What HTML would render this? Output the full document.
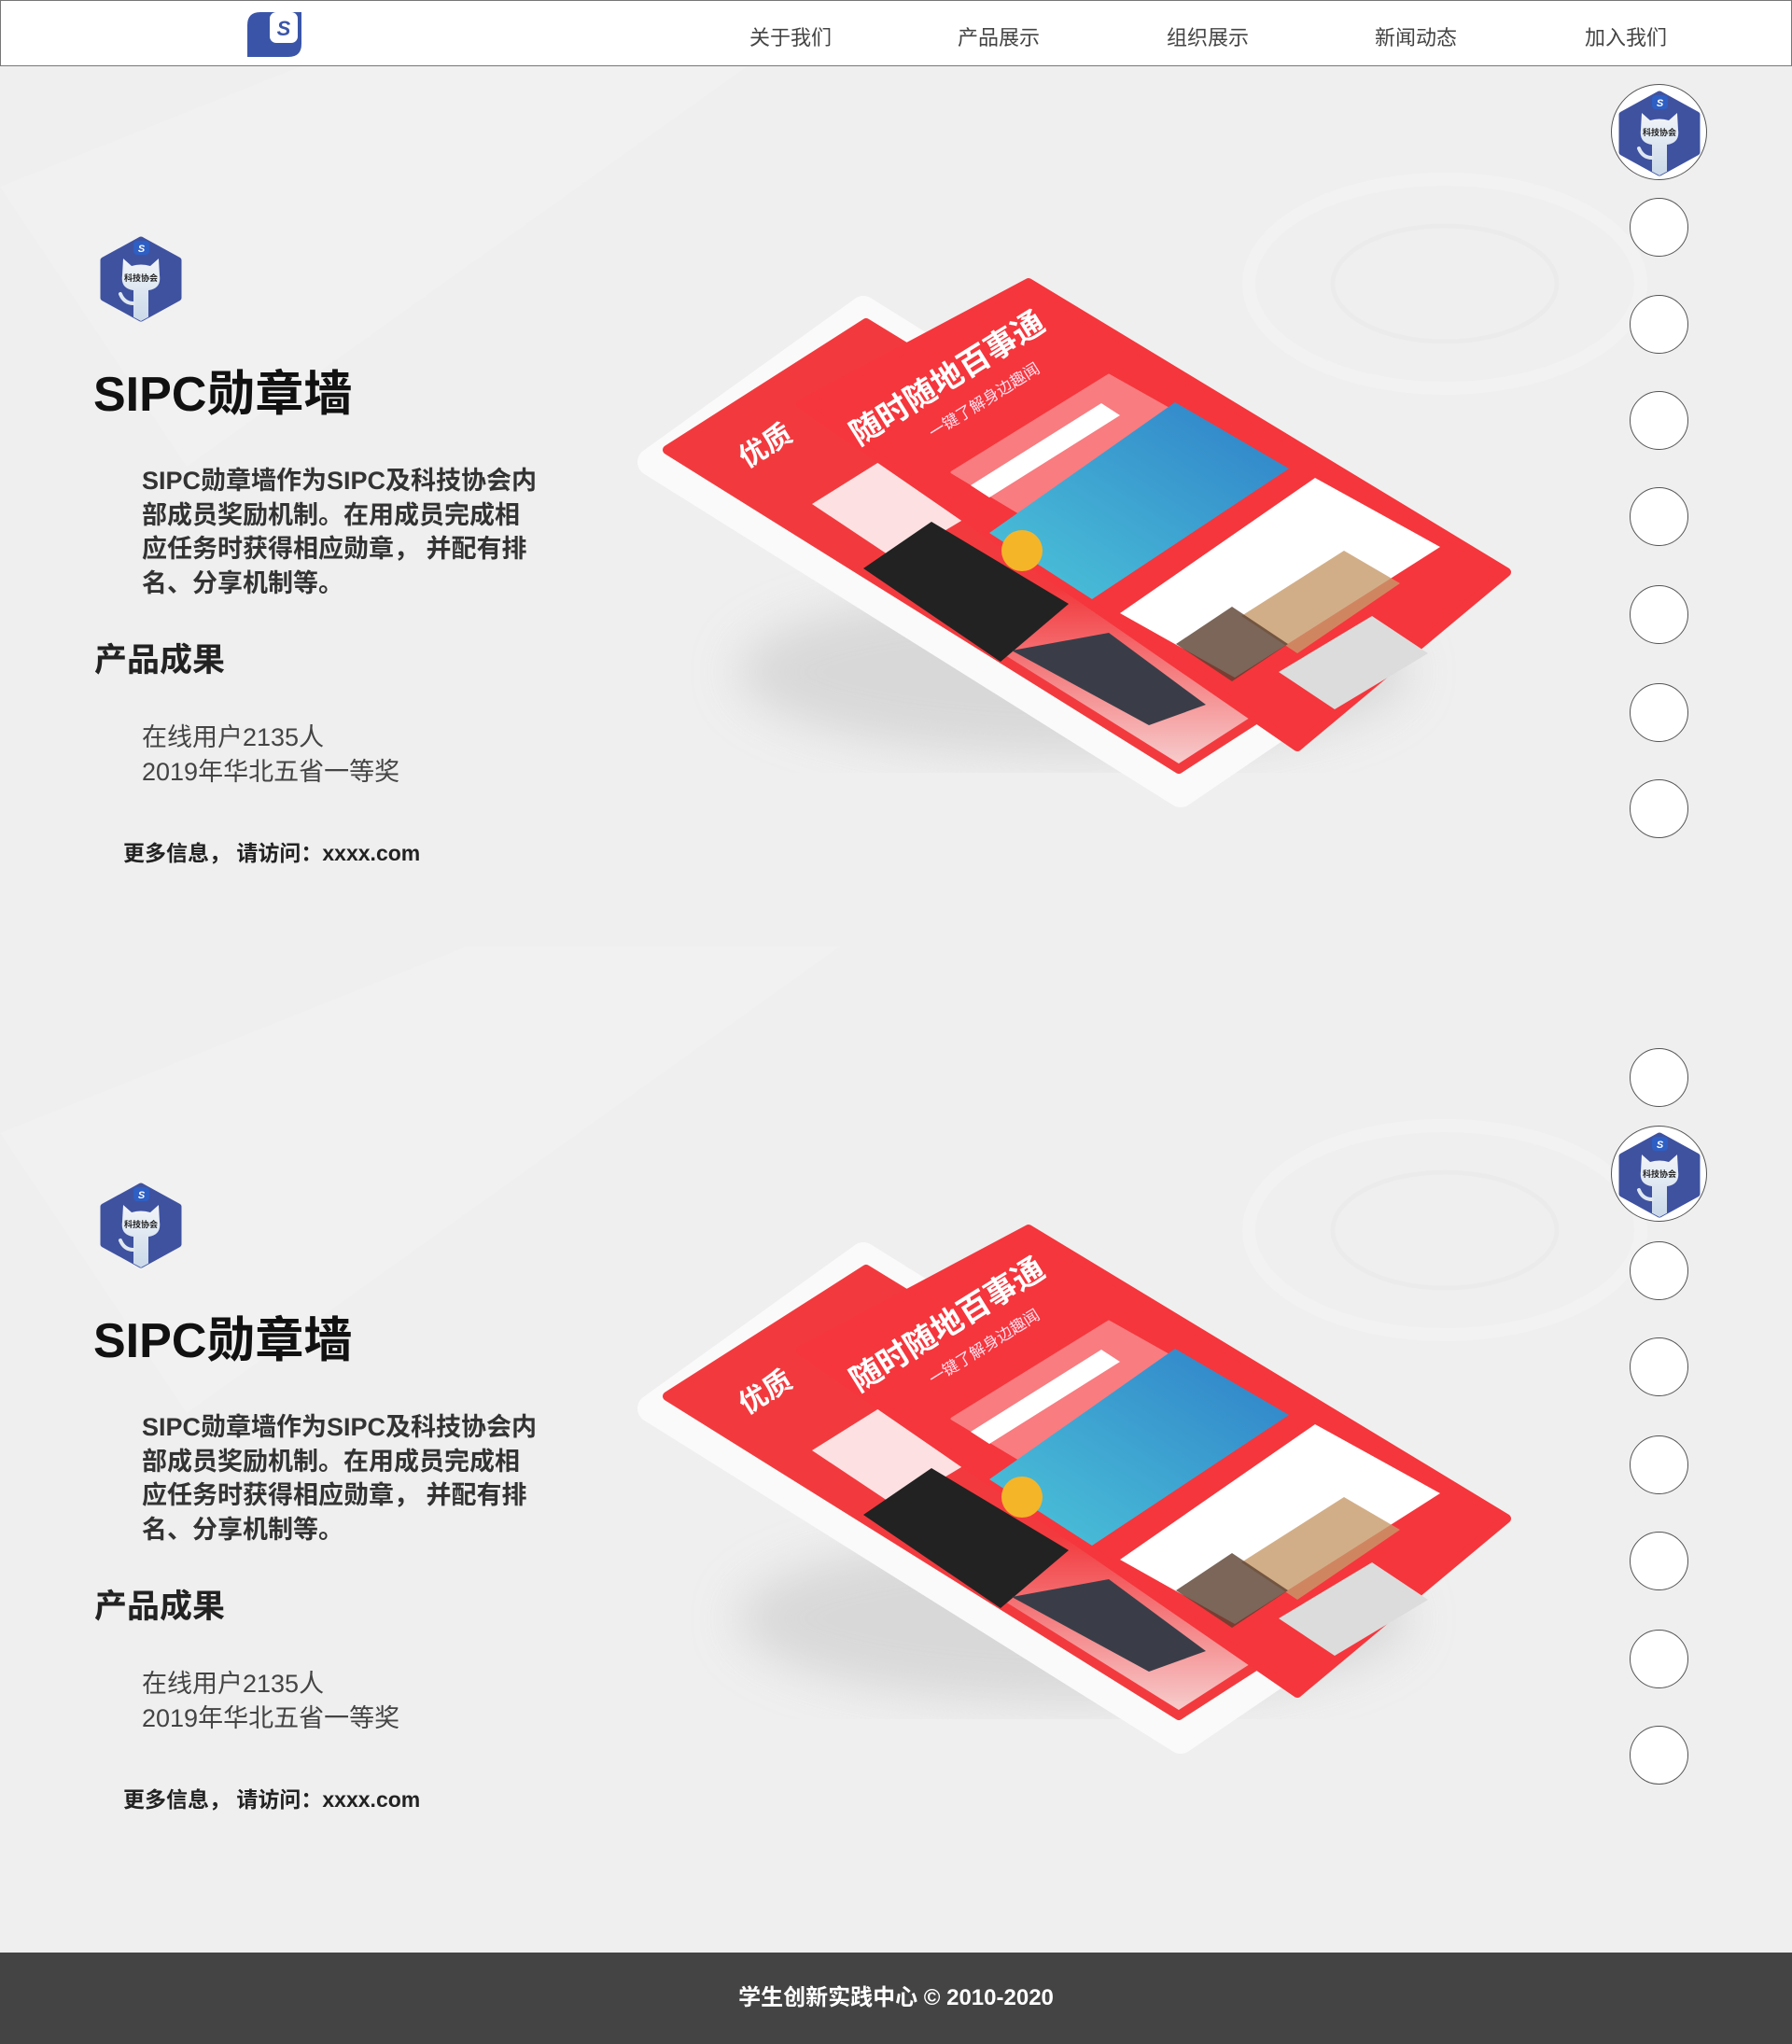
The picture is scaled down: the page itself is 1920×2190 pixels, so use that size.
<!DOCTYPE html>
<html><head><meta charset="utf-8">
<style>
*{margin:0;padding:0;box-sizing:border-box}
html,body{width:1920px;height:2190px;overflow:hidden;background:#efefef;font-family:"Liberation Sans","Noto Sans CJK SC",sans-serif}
.abs{position:absolute}
nav{position:absolute;left:0;top:0;width:1920px;height:71px;background:#fff;border:1px solid #777}
.nv{position:absolute;top:22px;font-size:22px;color:#444;transform:translateX(-50%);white-space:nowrap}
.title{position:absolute;left:100px;font-size:52px;font-weight:bold;color:#111;line-height:1;white-space:nowrap}
.para{position:absolute;left:152px;font-size:27px;font-weight:bold;color:#333;line-height:36.5px;white-space:nowrap}
.h2{position:absolute;left:101px;font-size:35px;font-weight:bold;color:#222;line-height:1}
.res{position:absolute;left:152px;font-size:27px;color:#444;line-height:37px;white-space:nowrap}
.more{position:absolute;left:132px;font-size:23px;font-weight:bold;color:#222;white-space:nowrap;line-height:1}
.dot{position:absolute;width:63px;height:63px;border-radius:50%;background:#fff;border:1px solid #555;left:1746px}
.act{position:absolute;width:103px;height:103px;border-radius:50%;background:#fff;border:1px solid #555;left:1726px;overflow:hidden}
footer{position:absolute;left:0;top:2092px;width:1920px;height:98px;background:#444;color:#fff;font-size:24px;font-weight:bold;text-align:center;line-height:98px}
</style></head><body>

<svg class="abs" style="left:0;top:0" width="1920" height="2190">
<defs>
<filter id="bl"><feGaussianBlur stdDeviation="25"/></filter>
<linearGradient id="blue" x1="0" y1="1" x2="1" y2="0"><stop offset="0" stop-color="#4cc6d9"/><stop offset="1" stop-color="#2f7fc8"/></linearGradient>
<linearGradient id="fade" x1="0" y1="0" x2="0" y2="1"><stop offset="0.6" stop-color="#f23a3e"/><stop offset="1" stop-color="#f7d0d0"/></linearGradient>
</defs>
<g opacity="0.5">
<ellipse cx="1548" cy="304" rx="210" ry="112" fill="none" stroke="#f6f6f6" stroke-width="14"/>
<ellipse cx="1548" cy="304" rx="120" ry="62" fill="none" stroke="#e8e8e8" stroke-width="5"/>
<ellipse cx="1548" cy="1318" rx="210" ry="112" fill="none" stroke="#f6f6f6" stroke-width="14"/>
<ellipse cx="1548" cy="1318" rx="120" ry="62" fill="none" stroke="#e8e8e8" stroke-width="5"/>
<polygon points="0,200 500,0 900,0 200,500" fill="#f3f3f3"/>
<polygon points="0,1214 500,1014 900,1014 200,1514" fill="#f3f3f3"/>
</g>
<g id="phone1">
<ellipse cx="1150" cy="720" rx="360" ry="90" fill="#cfcfcf" filter="url(#bl)" opacity="0.7"/>
<polygon points="698,495 925,332 1500,690 1265,850" fill="#fafafa" stroke="#fafafa" stroke-width="30" stroke-linejoin="round"/>
<polygon points="715,482 928,346 1480,684 1263,824" fill="url(#fade)" stroke="#f23a3e" stroke-width="10" stroke-linejoin="round"/>
<polygon points="870,540 985,468 1080,528 960,600" fill="#fff" opacity="0.85"/>
<polygon points="925,609 998,559 1145,647 1072,709" fill="#222"/>
<polygon points="1084,697 1188,678 1292,755 1231,777" fill="#3a3d48"/>
<polygon points="1102,303 1614,613 1390,800 858,433" fill="#f5363c" stroke="#f5363c" stroke-width="10" stroke-linejoin="round"/>
<polygon points="1020,506 1188,402 1300,465 1130,572" fill="#fff" opacity="0.35" stroke="#fff" stroke-width="3" stroke-linejoin="round"/>
<polygon points="1040,520 1180,432 1200,445 1060,533" fill="#fff"/>
<polygon points="1259,431 1381,502 1170,642 1060,571" fill="url(#blue)"/>
<circle cx="1095" cy="590" r="22" fill="#f5b528"/>
<polygon points="1200,657 1409,512 1543,586 1323,726" fill="#fff"/>
<polygon points="1330,660 1440,590 1500,625 1390,700" fill="#c79a6a" opacity="0.8"/>
<polygon points="1260,690 1320,650 1380,690 1320,730" fill="#5a4030" opacity="0.8"/>
<polygon points="1370,720 1470,660 1530,700 1430,760" fill="#dcdcdc"/>
<text x="0" y="0" transform="translate(920,478) rotate(-32)" font-size="34" font-weight="bold" fill="#fff" font-family="Liberation Sans,Noto Sans CJK SC,sans-serif">随时随地百事通</text>
<text x="0" y="0" transform="translate(1000,470) rotate(-32)" font-size="17" fill="#fde" font-family="Liberation Sans,Noto Sans CJK SC,sans-serif">一键了解身边趣闻</text>
<text x="0" y="0" transform="translate(800,502) rotate(-32)" font-size="30" font-weight="bold" fill="#fff" font-family="Liberation Sans,Noto Sans CJK SC,sans-serif">优质</text>
</g>
<g transform="translate(0,1014)">
<ellipse cx="1150" cy="720" rx="360" ry="90" fill="#cfcfcf" filter="url(#bl)" opacity="0.7"/>
<polygon points="698,495 925,332 1500,690 1265,850" fill="#fafafa" stroke="#fafafa" stroke-width="30" stroke-linejoin="round"/>
<polygon points="715,482 928,346 1480,684 1263,824" fill="url(#fade)" stroke="#f23a3e" stroke-width="10" stroke-linejoin="round"/>
<polygon points="870,540 985,468 1080,528 960,600" fill="#fff" opacity="0.85"/>
<polygon points="925,609 998,559 1145,647 1072,709" fill="#222"/>
<polygon points="1084,697 1188,678 1292,755 1231,777" fill="#3a3d48"/>
<polygon points="1102,303 1614,613 1390,800 858,433" fill="#f5363c" stroke="#f5363c" stroke-width="10" stroke-linejoin="round"/>
<polygon points="1020,506 1188,402 1300,465 1130,572" fill="#fff" opacity="0.35" stroke="#fff" stroke-width="3" stroke-linejoin="round"/>
<polygon points="1040,520 1180,432 1200,445 1060,533" fill="#fff"/>
<polygon points="1259,431 1381,502 1170,642 1060,571" fill="url(#blue)"/>
<circle cx="1095" cy="590" r="22" fill="#f5b528"/>
<polygon points="1200,657 1409,512 1543,586 1323,726" fill="#fff"/>
<polygon points="1330,660 1440,590 1500,625 1390,700" fill="#c79a6a" opacity="0.8"/>
<polygon points="1260,690 1320,650 1380,690 1320,730" fill="#5a4030" opacity="0.8"/>
<polygon points="1370,720 1470,660 1530,700 1430,760" fill="#dcdcdc"/>
<text x="0" y="0" transform="translate(920,478) rotate(-32)" font-size="34" font-weight="bold" fill="#fff" font-family="Liberation Sans,Noto Sans CJK SC,sans-serif">随时随地百事通</text>
<text x="0" y="0" transform="translate(1000,470) rotate(-32)" font-size="17" fill="#fde" font-family="Liberation Sans,Noto Sans CJK SC,sans-serif">一键了解身边趣闻</text>
<text x="0" y="0" transform="translate(800,502) rotate(-32)" font-size="30" font-weight="bold" fill="#fff" font-family="Liberation Sans,Noto Sans CJK SC,sans-serif">优质</text>
</g>
</svg>

<nav>
<svg class="abs" style="left:264px;top:12px" width="58" height="48" viewBox="0 0 58 48">
<path d="M14 0 H58 V34 Q58 48 44 48 H0 V14 Q0 0 14 0Z" fill="#3a55a8"/>
<rect x="24" y="0" width="30" height="33" rx="7" fill="#fff"/>
<text x="39" y="25" font-size="22" font-weight="bold" font-style="italic" fill="#3a55a8" text-anchor="middle" font-family="Liberation Sans,sans-serif">S</text>
</svg>
<div class="nv" style="left:846px">关于我们</div>
<div class="nv" style="left:1069px">产品展示</div>
<div class="nv" style="left:1293px">组织展示</div>
<div class="nv" style="left:1516px">新闻动态</div>
<div class="nv" style="left:1741px">加入我们</div>
</nav>

<svg class="abs" style="left:107px;top:253px" width="88" height="92" viewBox="0 0 88 92">
<defs><linearGradient id="cat" x1="0" y1="0" x2="0" y2="1"><stop offset="0" stop-color="#f2f5f9"/><stop offset="1" stop-color="#c9d8e8"/></linearGradient><clipPath id="hx"><polygon points="44,1 87,24 87,68 44,91 1,68 1,24"/></clipPath></defs>
<polygon points="44,4 84,26 84,66 44,88 4,66 4,26" fill="#3f52a0" stroke="#3f52a0" stroke-width="7" stroke-linejoin="round"/>
<g clip-path="url(#hx)">
<path d="M24 42 L25 24 L34 32 Q44 29 54 32 L63 24 L64 42 Q66 56 52 58 L52 92 L36 92 L36 58 Q22 56 24 42Z" fill="url(#cat)"/>
<path d="M36 72 Q26 72 22 62" stroke="#dfe7f0" stroke-width="4" fill="none" stroke-linecap="round"/>
</g>
<rect x="36" y="5" width="17" height="15" rx="4" fill="#2d5fc4"/>
<text x="44.5" y="17" font-size="11" font-weight="bold" font-style="italic" fill="#fff" text-anchor="middle" font-family="Liberation Sans,sans-serif">S</text>
<text x="44" y="48" font-size="9" font-weight="bold" fill="#222" text-anchor="middle" font-family="Liberation Sans,Noto Sans CJK SC,sans-serif">科技协会</text>
</svg>
<div class="title" style="top:397px">SIPC勋章墙</div>
<div class="para" style="top:497px">SIPC勋章墙作为SIPC及科技协会内<br>部成员奖励机制。在用成员完成相<br>应任务时获得相应勋章，&nbsp;并配有排<br>名、分享机制等。</div>
<div class="h2" style="top:690px">产品成果</div>
<div class="res" style="top:772px">在线用户2135人<br>2019年华北五省一等奖</div>
<div class="more" style="top:903px">更多信息，&nbsp;请访问：xxxx.com</div>

<svg class="abs" style="left:107px;top:1267px" width="88" height="92" viewBox="0 0 88 92">
<polygon points="44,4 84,26 84,66 44,88 4,66 4,26" fill="#3f52a0" stroke="#3f52a0" stroke-width="7" stroke-linejoin="round"/>
<g clip-path="url(#hx)">
<path d="M24 42 L25 24 L34 32 Q44 29 54 32 L63 24 L64 42 Q66 56 52 58 L52 92 L36 92 L36 58 Q22 56 24 42Z" fill="url(#cat)"/>
<path d="M36 72 Q26 72 22 62" stroke="#dfe7f0" stroke-width="4" fill="none" stroke-linecap="round"/>
</g>
<rect x="36" y="5" width="17" height="15" rx="4" fill="#2d5fc4"/>
<text x="44.5" y="17" font-size="11" font-weight="bold" font-style="italic" fill="#fff" text-anchor="middle" font-family="Liberation Sans,sans-serif">S</text>
<text x="44" y="48" font-size="9" font-weight="bold" fill="#222" text-anchor="middle" font-family="Liberation Sans,Noto Sans CJK SC,sans-serif">科技协会</text>
</svg>
<div class="title" style="top:1411px">SIPC勋章墙</div>
<div class="para" style="top:1511px">SIPC勋章墙作为SIPC及科技协会内<br>部成员奖励机制。在用成员完成相<br>应任务时获得相应勋章，&nbsp;并配有排<br>名、分享机制等。</div>
<div class="h2" style="top:1704px">产品成果</div>
<div class="res" style="top:1786px">在线用户2135人<br>2019年华北五省一等奖</div>
<div class="more" style="top:1917px">更多信息，&nbsp;请访问：xxxx.com</div>

<div class="act" style="top:90px">
<svg style="position:absolute;left:7px;top:4px" width="88" height="96" viewBox="0 0 88 92">
<polygon points="44,4 84,26 84,66 44,88 4,66 4,26" fill="#3f52a0" stroke="#3f52a0" stroke-width="7" stroke-linejoin="round"/>
<g clip-path="url(#hx)">
<path d="M24 42 L25 24 L34 32 Q44 29 54 32 L63 24 L64 42 Q66 56 52 58 L52 92 L36 92 L36 58 Q22 56 24 42Z" fill="url(#cat)"/>
<path d="M36 72 Q26 72 22 62" stroke="#dfe7f0" stroke-width="4" fill="none" stroke-linecap="round"/>
</g>
<rect x="36" y="5" width="17" height="15" rx="4" fill="#2d5fc4"/>
<text x="44.5" y="17" font-size="11" font-weight="bold" font-style="italic" fill="#fff" text-anchor="middle" font-family="Liberation Sans,sans-serif">S</text>
<text x="44" y="48" font-size="9" font-weight="bold" fill="#222" text-anchor="middle" font-family="Liberation Sans,Noto Sans CJK SC,sans-serif">科技协会</text>
</svg></div>
<div class="dot" style="top:212px"></div>
<div class="dot" style="top:316px"></div>
<div class="dot" style="top:419px"></div>
<div class="dot" style="top:522px"></div>
<div class="dot" style="top:627px"></div>
<div class="dot" style="top:732px"></div>
<div class="dot" style="top:835px"></div>

<div class="dot" style="top:1123px"></div>
<div class="act" style="top:1206px">
<svg style="position:absolute;left:7px;top:4px" width="88" height="96" viewBox="0 0 88 92">
<polygon points="44,4 84,26 84,66 44,88 4,66 4,26" fill="#3f52a0" stroke="#3f52a0" stroke-width="7" stroke-linejoin="round"/>
<g clip-path="url(#hx)">
<path d="M24 42 L25 24 L34 32 Q44 29 54 32 L63 24 L64 42 Q66 56 52 58 L52 92 L36 92 L36 58 Q22 56 24 42Z" fill="url(#cat)"/>
<path d="M36 72 Q26 72 22 62" stroke="#dfe7f0" stroke-width="4" fill="none" stroke-linecap="round"/>
</g>
<rect x="36" y="5" width="17" height="15" rx="4" fill="#2d5fc4"/>
<text x="44.5" y="17" font-size="11" font-weight="bold" font-style="italic" fill="#fff" text-anchor="middle" font-family="Liberation Sans,sans-serif">S</text>
<text x="44" y="48" font-size="9" font-weight="bold" fill="#222" text-anchor="middle" font-family="Liberation Sans,Noto Sans CJK SC,sans-serif">科技协会</text>
</svg></div>
<div class="dot" style="top:1330px"></div>
<div class="dot" style="top:1433px"></div>
<div class="dot" style="top:1538px"></div>
<div class="dot" style="top:1641px"></div>
<div class="dot" style="top:1746px"></div>
<div class="dot" style="top:1849px"></div>

<footer>学生创新实践中心 © 2010-2020</footer>
</body></html>
